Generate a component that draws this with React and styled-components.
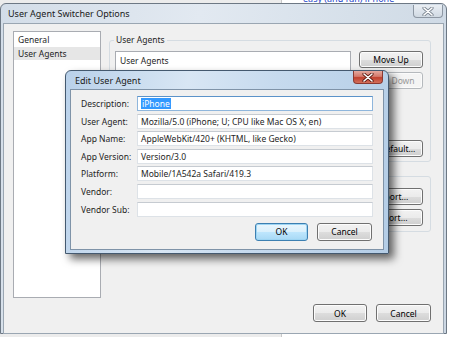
import React from "react";
import styled, { createGlobalStyle } from "styled-components";

const GlobalStyle = createGlobalStyle`
  html, body {
    margin: 0;
    padding: 0;
    background: #ffffff;
  }
  body {
    font-family: "Noto Sans", "Liberation Sans", sans-serif;
    font-size: 8.5px;
    color: #1e1e1e;
  }
`;

const Desktop = styled.div`
  position: relative;
  width: 450px;
  height: 337px;
  overflow: hidden;
  background: #ffffff;
`;

// web page showing behind the windows
const BackPage = styled.div`
  position: absolute;
  inset: 0;
  display: grid;
  grid-template-columns: 282px 1fr;
`;

const BackSide = styled.div`
  background: #ececec;
  border-right: 1px solid #c8c8c8;
`;

const BackMain = styled.div`
  padding-left: 21px;
  margin-top: -8px;
`;

const BackLink = styled.a`
  color: #2144c8;
  font-size: 9px;
  text-decoration: underline;
`;

const Window = styled.div`
  position: absolute;
  left: ${(p) => p.$x}px;
  top: ${(p) => p.$y}px;
  width: ${(p) => p.$w}px;
  height: ${(p) => p.$h}px;
  box-sizing: border-box;
  display: flex;
  flex-direction: column;
  border: 1px solid ${(p) => (p.$active ? "#44596f" : "#6d7884")};
  border-radius: 6px 6px 0 0;
  padding: 0 ${(p) => p.$side}px ${(p) => p.$bottom}px;
  background: ${(p) =>
    p.$active
      ? "linear-gradient(100deg, #b9d1ea 0%, #d8e6f4 35%, #c6daee 60%, #b4cde6 100%)"
      : "linear-gradient(100deg, #d3dde8 0%, #e2e9f1 40%, #d6e0ea 70%, #ccd7e3 100%)"};
  box-shadow: ${(p) =>
    p.$active ? "5px 5px 9px rgba(0, 0, 0, 0.6)" : "none"};
`;

const TitleBar = styled.div`
  height: ${(p) => p.$h}px;
  display: flex;
  align-items: flex-start;
  flex-shrink: 0;
`;

const Title = styled.div`
  align-self: center;
  padding-left: ${(p) => p.$pad}px;
  font-size: 9px;
  color: #1a1a1a;
  white-space: nowrap;
`;

const CloseButton = styled.div`
  margin-left: auto;
  margin-top: ${(p) => p.$top}px;
  margin-right: 1px;
  width: 30px;
  height: 13px;
  box-sizing: border-box;
  display: flex;
  align-items: center;
  justify-content: center;
  border: 1px solid ${(p) => (p.$red ? "#8a3a32" : "#8d97a3")};
  border-top: none;
  border-radius: 0 0 4px 4px;
  background: ${(p) =>
    p.$red
      ? "linear-gradient(#e4a99f 0%, #d47a6c 45%, #c0402e 55%, #d2705c 100%)"
      : "linear-gradient(#e9eef3 0%, #dde4ec 50%, #d0d9e2 100%)"};
`;

const Client = styled.div`
  flex: 1;
  display: flex;
  flex-direction: column;
  background: #f0f0f0;
  border: 1px solid ${(p) => (p.$active ? "#7f93a8" : "#9aa6b2")};
  padding: ${(p) => p.$pad};
`;

const MainArea = styled.div`
  display: flex;
  gap: 8px;
  height: 267px;
`;

const ListBox = styled.div`
  width: 88px;
  box-sizing: border-box;
  background: #ffffff;
  border: 1px solid #a9acb2;
  padding-top: 1px;
`;

const ListItem = styled.div`
  height: 13.5px;
  line-height: 13.5px;
  padding-left: 4px;
  background: ${(p) => (p.$selected ? "#e6e6e6" : "transparent")};
`;

const Pages = styled.div`
  flex: 1;
  display: flex;
  flex-direction: column;
  gap: 14px;
  padding-top: 9px;
`;

const Group = styled.div`
  position: relative;
  height: ${(p) => p.$h}px;
  box-sizing: border-box;
  border: 1px solid #d5dce2;
  border-radius: 3px;
  padding: ${(p) => p.$pad};
  display: flex;
  flex-direction: column;
  gap: 4px;
`;

const Legend = styled.div`
  position: absolute;
  top: -7px;
  left: 4px;
  padding: 0 2px;
  background: #f0f0f0;
  line-height: 12px;
`;

const AgentsRow = styled.div`
  flex: 1;
  display: flex;
  gap: 8px;
`;

const TreeBox = styled.div`
  flex: 1;
  background: #ffffff;
  border: 1px solid #a9acb2;
`;

const TreeHeader = styled.div`
  height: 18px;
  line-height: 18px;
  padding-left: 4px;
  border-bottom: 1px solid #e3e3e3;
`;

const ButtonColumn = styled.div`
  display: flex;
  flex-direction: column;
  align-items: flex-end;
  gap: 4px;
`;

const ButtonRow = styled.div`
  display: flex;
  justify-content: flex-end;
  gap: 9px;
  margin-top: ${(p) => p.$top || 0}px;
`;

const Button = styled.button`
  width: ${(p) => p.$w}px;
  height: ${(p) => p.$h || 17}px;
  box-sizing: border-box;
  padding: 0;
  font-family: inherit;
  font-size: 8.5px;
  border-radius: 3px;
  border: 1px solid
    ${(p) => (p.$disabled ? "#b5b9bd" : p.$focus ? "#3c7fb1" : "#707070")};
  color: ${(p) => (p.$disabled ? "#9a9a9a" : "#000000")};
  background: ${(p) =>
    p.$disabled
      ? "#f4f4f4"
      : p.$focus
      ? "linear-gradient(#eaf6fd 0%, #d9f0fc 50%, #bee6fd 51%, #a7d9f5 100%)"
      : "linear-gradient(#f2f2f2 0%, #ebebeb 50%, #dddddd 51%, #cfcfcf 100%)"};
  box-shadow: inset 0 0 0 1px
    ${(p) => (p.$disabled ? "#fbfbfb" : p.$focus ? "#9ed5f3" : "#fcfcfc")};
`;

const Form = styled.div`
  display: grid;
  grid-template-columns: 56px 236px;
  row-gap: 2.6px;
  align-items: center;
`;

const Label = styled.div`
  line-height: 15px;
`;

const Field = styled.div`
  height: 15px;
  box-sizing: border-box;
  background: #ffffff;
  border: 1px solid ${(p) => (p.$focus ? "#8fb6dc" : "#dde2e7")};
  border-top-color: ${(p) => (p.$focus ? "#5c93c9" : "#c6cbd1")};
  padding-left: 3px;
  line-height: 13px;
  white-space: nowrap;
  overflow: hidden;
`;

const Selected = styled.span`
  background: #3399ff;
  color: #ffffff;
  padding: 0 1px;
`;

const XGlyph = ({ red }) => (
  <svg width="12" height="9" viewBox="0 0 12 9">
    <path
      d="M2 1 L10 8 M10 1 L2 8"
      stroke={red ? "#5a1a12" : "#7b8591"}
      strokeWidth="3.2"
      strokeLinecap="round"
    />
    <path
      d="M2 1 L10 8 M10 1 L2 8"
      stroke="#ffffff"
      strokeWidth="1.6"
      strokeLinecap="round"
    />
  </svg>
);

const fields = [
  { label: "Description:", value: "iPhone", focus: true },
  { label: "User Agent:", value: "Mozilla/5.0 (iPhone; U; CPU like Mac OS X; en)" },
  { label: "App Name:", value: "AppleWebKit/420+ (KHTML, like Gecko)" },
  { label: "App Version:", value: "Version/3.0" },
  { label: "Platform:", value: "Mobile/1A542a Safari/419.3" },
  { label: "Vendor:", value: "" },
  { label: "Vendor Sub:", value: "" },
];

export default function App() {
  return (
    <Desktop>
      <GlobalStyle />
      <BackPage>
        <BackSide />
        <BackMain>
          <BackLink>easy (and fun) iPhone</BackLink>
        </BackMain>
      </BackPage>

      <Window $x={0} $y={3} $w={447} $h={331} $side={2} $bottom={1}>
        <TitleBar $h={19}>
          <Title $pad={5}>User Agent Switcher Options</Title>
          <CloseButton $top={1}>
            <XGlyph />
          </CloseButton>
        </TitleBar>
        <Client $pad="7px 12px 11px 9px">
          <MainArea>
            <ListBox>
              <ListItem>General</ListItem>
              <ListItem $selected>User Agents</ListItem>
            </ListBox>
            <Pages>
              <Group $h={122} $pad="10px 7px 4px 5px">
                <Legend>User Agents</Legend>
                <AgentsRow>
                  <TreeBox>
                    <TreeHeader>User Agents</TreeHeader>
                  </TreeBox>
                  <ButtonColumn>
                    <Button $w={64}>Move Up</Button>
                    <Button $w={64} $disabled>
                      Move Down
                    </Button>
                  </ButtonColumn>
                </AgentsRow>
                <ButtonRow>
                  <Button $w={84}>Restore Default...</Button>
                </ButtonRow>
              </Group>
              <Group $h={56} $pad="11px 7px 4px 5px">
                <ButtonColumn>
                  <Button $w={64}>Import...</Button>
                  <Button $w={64}>Export...</Button>
                </ButtonColumn>
              </Group>
            </Pages>
          </MainArea>
          <ButtonRow $top={6}>
            <Button $w={54} $h={18}>
              OK
            </Button>
            <Button $w={55} $h={18}>
              Cancel
            </Button>
          </ButtonRow>
        </Client>
      </Window>

      <Window $x={65} $y={70} $w={324} $h={184} $side={4} $bottom={3} $active>
        <TitleBar $h={18}>
          <Title $pad={5}>Edit User Agent</Title>
          <CloseButton $top={0} $red>
            <XGlyph red />
          </CloseButton>
        </TitleBar>
        <Client $active $pad="6px 11px 0 10px">
          <Form>
            {fields.map((f) => (
              <React.Fragment key={f.label}>
                <Label>{f.label}</Label>
                <Field $focus={f.focus}>
                  {f.focus ? <Selected>{f.value}</Selected> : f.value}
                </Field>
              </React.Fragment>
            ))}
          </Form>
          <ButtonRow $top={6}>
            <Button $w={53} $h={18} $focus>
              OK
            </Button>
            <Button $w={55} $h={18}>
              Cancel
            </Button>
          </ButtonRow>
        </Client>
      </Window>
    </Desktop>
  );
}
